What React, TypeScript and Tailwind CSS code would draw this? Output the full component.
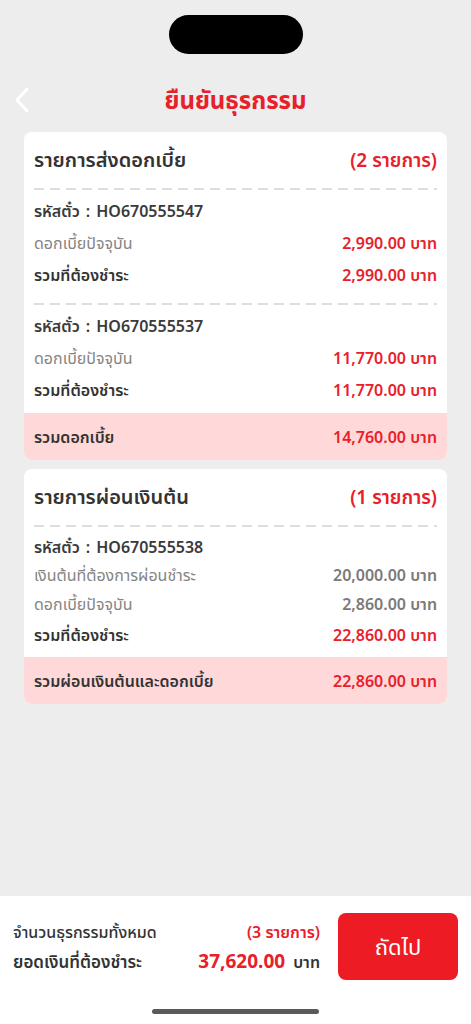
const red = "text-[#e8202a]";

type Row = { label: string; value: string; kind: "muted" | "total" };

type Ticket = { code: string; rows: Row[] };

const interestTickets: Ticket[] = [
  {
    code: "HO670555547",
    rows: [
      { label: "ดอกเบี้ยปัจจุบัน", value: "2,990.00", kind: "muted" },
      { label: "รวมที่ต้องชำระ", value: "2,990.00", kind: "total" },
    ],
  },
  {
    code: "HO670555537",
    rows: [
      { label: "ดอกเบี้ยปัจจุบัน", value: "11,770.00", kind: "muted" },
      { label: "รวมที่ต้องชำระ", value: "11,770.00", kind: "total" },
    ],
  },
];

function Dash() {
  return (
    <div className="h-[2px] bg-[repeating-linear-gradient(to_right,#dedede_0_10px,transparent_10px_16px)]" />
  );
}

function Header({ title, count }: { title: string; count: string }) {
  return (
    <div className="flex h-[56px] items-center justify-between">
      <span className="text-[20px] font-semibold text-[#333]">{title}</span>
      <span className={`text-[19px] font-semibold ${red}`}>{count}</span>
    </div>
  );
}

function Amount({ value, className }: { value: string; className: string }) {
  return (
    <span className={`text-[16px] font-semibold ${className}`}>
      {value} บาท
    </span>
  );
}

function Summary({ label, value }: { label: string; value: string }) {
  return (
    <div className="flex h-[47px] items-center justify-between bg-[#ffd8d9] px-[10px]">
      <span className="text-[16px] font-semibold text-[#333]">{label}</span>
      <Amount value={value} className={red} />
    </div>
  );
}

export default function App() {
  return (
    <div
      className="flex min-h-screen flex-col bg-[#ededed]"
      style={{ fontFamily: '"Noto Sans", "Noto Sans Thai", sans-serif' }}
    >
      <div className="flex justify-center pt-[15px]">
        <div className="h-[39px] w-[134px] rounded-full bg-black" />
      </div>

      <div className="relative mt-[24px] flex h-[44px] items-center justify-center">
        <svg className="absolute left-[13px] top-[9px]" width="18" height="26" viewBox="0 0 18 26" fill="none">
          <path d="M14 2 L4 13 L14 24" stroke="white" strokeWidth="3" strokeLinecap="round" strokeLinejoin="round" />
        </svg>
        <h1 className={`text-[24px] font-bold ${red}`}>ยืนยันธุรกรรม</h1>
      </div>

      <main className="mt-[10px] flex flex-1 flex-col gap-[9px] px-[24px]">
        <section className="overflow-hidden rounded-[8px] bg-white">
          <div className="px-[10px]">
            <Header title="รายการส่งดอกเบี้ย" count="(2 รายการ)" />
            {interestTickets.map((ticket, i) => (
              <div key={ticket.code}>
                <div className={i === 0 ? "" : "mt-[12px]"}>
                  <Dash />
                </div>
                <div className="flex flex-col pt-[5px]">
                  <div className="flex h-[32px] items-center gap-[6px] text-[16px] font-semibold text-[#3a3a3a]">
                    <span>รหัสตั๋ว</span>
                    <span>:</span>
                    <span>{ticket.code}</span>
                  </div>
                  {ticket.rows.map((row) => (
                    <div key={row.label} className="flex h-[32px] items-center justify-between">
                      <span
                        className={
                          row.kind === "muted"
                            ? "text-[16px] text-[#858585]"
                            : "text-[16px] font-semibold text-[#333]"
                        }
                      >
                        {row.label}
                      </span>
                      <Amount value={row.value} className={red} />
                    </div>
                  ))}
                </div>
              </div>
            ))}
            <div className="h-[7px]" />
          </div>
          <Summary label="รวมดอกเบี้ย" value="14,760.00" />
        </section>

        <section className="overflow-hidden rounded-[8px] bg-white">
          <div className="px-[10px]">
            <Header title="รายการผ่อนเงินต้น" count="(1 รายการ)" />
            <Dash />
            <div className="flex flex-col pt-[6px] pb-[6px]">
              <div className="flex h-[28px] items-center gap-[6px] text-[16px] font-semibold text-[#3a3a3a]">
                <span>รหัสตั๋ว</span>
                <span>:</span>
                <span>HO670555538</span>
              </div>
              <div className="flex h-[28px] items-center justify-between">
                <span className="text-[16px] text-[#858585]">เงินต้นที่ต้องการผ่อนชำระ</span>
                <Amount value="20,000.00" className="text-[#7a7a7a]" />
              </div>
              <div className="flex h-[29px] items-center justify-between">
                <span className="text-[16px] text-[#858585]">ดอกเบี้ยปัจจุบัน</span>
                <Amount value="2,860.00" className="text-[#7a7a7a]" />
              </div>
              <div className="flex h-[33px] items-center justify-between">
                <span className="text-[16px] font-semibold text-[#333]">รวมที่ต้องชำระ</span>
                <Amount value="22,860.00" className={red} />
              </div>
            </div>
          </div>
          <Summary label="รวมผ่อนเงินต้นและดอกเบี้ย" value="22,860.00" />
        </section>
      </main>

      <footer className="bg-white px-[13px] pt-[17px] pb-[10px]">
        <div className="flex items-center gap-[18px]">
          <div className="flex flex-1 flex-col">
            <div className="flex h-[30px] items-center justify-between">
              <span className="text-[16px] font-medium text-[#333]">จำนวนธุรกรรมทั้งหมด</span>
              <span className={`text-[16px] font-semibold ${red}`}>(3 รายการ)</span>
            </div>
            <div className="flex h-[30px] items-center justify-between">
              <span className="text-[17px] font-semibold text-[#333]">ยอดเงินที่ต้องชำระ</span>
              <span className="flex items-baseline gap-[8px]">
                <span className={`text-[19px] font-bold ${red}`}>37,620.00</span>
                <span className="text-[16px] font-semibold text-[#333]">บาท</span>
              </span>
            </div>
          </div>
          <button className="flex h-[67px] w-[120px] items-center justify-center rounded-[8px] bg-[#ed1c24] text-[22px] text-white">
            ถัดไป
          </button>
        </div>
        <div className="mt-[29px] flex justify-center">
          <div className="h-[5px] w-[167px] rounded-full bg-[#5a5a5a]" />
        </div>
      </footer>
    </div>
  );
}
